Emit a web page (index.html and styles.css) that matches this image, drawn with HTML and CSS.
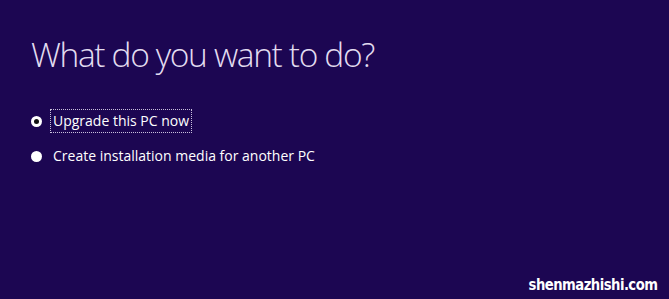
FILE: index.html
```html
<!DOCTYPE html>
<html lang="en">
<head>
    <meta charset="UTF-8">
    <meta name="viewport" content="width=device-width, initial-scale=1.0">
    <title>Windows 10 Setup</title>
    <link rel="stylesheet" href="styles.css">
</head>
<body>
    <div class="setup">
        <h1 class="title">What do you want to do?</h1>

        <div class="options">
            <label class="option">
                <input type="radio" name="action" checked>
                <span class="dot checked"></span>
                <span class="label focused">Upgrade this PC now</span>
            </label>
            <label class="option">
                <input type="radio" name="action">
                <span class="dot"></span>
                <span class="label">Create installation media for another PC</span>
            </label>
        </div>
    </div>

    <div class="watermark">shenmazhishi.com</div>
</body>
</html>
```

FILE: styles.css
```css
body {
    margin: 0;
    width: 669px;
    height: 299px;
    overflow: hidden;
    background-color: #1c0652;
    color: #ffffff;
    font-family: "Open Sans", "Noto Sans", sans-serif;
    position: relative;
}
.setup {
    padding: 30px 0 0 31px;
}
.title {
    margin: 0;
    font-family: "Open Sans", sans-serif;
    font-size: 33.5px;
    font-weight: 300;
    color: #e2dcf0;
    line-height: 48px;
    letter-spacing: -1.35px;
}
.options {
    margin-top: 31px;
    display: flex;
    flex-direction: column;
    gap: 11px;
}
.option {
    display: flex;
    align-items: center;
    gap: 8px;
    font-size: 14px;
    color: #ffffff;
}
.option input {
    display: none;
}
.dot {
    width: 11px;
    height: 11px;
    border-radius: 50%;
    background-color: #ffffff;
    position: relative;
    flex-shrink: 0;
}
.dot.checked::after {
    content: "";
    position: absolute;
    left: 3px;
    top: 3px;
    width: 5px;
    height: 5px;
    border-radius: 50%;
    background-color: #111111;
}
.label {
    padding: 1px 2px;
    line-height: 20px;
    border: 1px dotted transparent;
}
.label.focused {
    border-color: #c8c0dc;
}
.watermark {
    position: absolute;
    right: 12px;
    bottom: 6px;
    font-family: "DejaVu Sans", sans-serif;
    font-weight: bold;
    font-size: 15px;
    line-height: 16px;
    color: #ffffff;
    letter-spacing: -0.6px;
    transform: scaleX(0.88);
    transform-origin: right center;
}
```
